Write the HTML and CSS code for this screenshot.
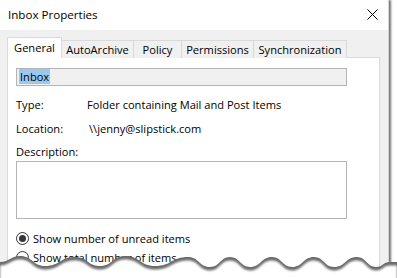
FILE: index.html
```html
<!DOCTYPE html>
<html lang="en">
<head>
  <meta charset="UTF-8" />
  <title>Inbox Properties</title>
  <link rel="stylesheet" href="styles.css">
</head>
<body>

  <div class="window">
    <header class="titlebar">
      <span class="title">Inbox Properties</span>
      <svg class="close" width="11" height="11" viewBox="0 0 11 11">
        <path d="M0.5 0.5 L10.5 10.5 M10.5 0.5 L0.5 10.5" stroke="#000" stroke-width="1" fill="none"/>
      </svg>
    </header>

    <div class="dialog">
      <nav class="tabs">
        <span class="tab active">General</span>
        <span class="tab">AutoArchive</span>
        <span class="tab">Policy</span>
        <span class="tab">Permissions</span>
        <span class="tab">Synchronization</span>
      </nav>

      <div class="panel">
        <div class="name-box"><span class="selected">Inbox</span></div>

        <div class="field-row first">
          <span class="label">Type:</span>
          <span>Folder containing Mail and Post Items</span>
        </div>
        <div class="field-row">
          <span class="label">Location:</span>
          <span class="path">\\jenny@slipstick.com</span>
        </div>

        <div class="desc-label">Description:</div>
        <div class="desc-box"></div>

        <div class="options">
          <div class="radio-row"><span class="radio checked"></span>Show number of unread items</div>
          <div class="radio-row"><span class="radio"></span>Show total number of items</div>
        </div>
      </div>
    </div>
  </div>

  <!-- torn paper edge -->
  <svg class="tear" width="397" height="26" viewBox="0 0 397 26">
    <defs>
      <filter id="soft" x="-5%" y="-50%" width="110%" height="200%">
        <feGaussianBlur stdDeviation="1.1"/>
      </filter>
    </defs>
    <path fill="#6a6a6a" d="M0 10 C10 10 10 4 20 4 C32.5 4 32.5 14 45 14 C60 14 60 5 75 5 C87.5 5 87.5 14 100 14 C112.5 14 112.5 4 125 4 C140 4 140 14 155 14 C171.5 14 171.5 5 188 5 C199 5 199 15 210 15 C220 15 220 5 230 5 C240 5 240 15 250 15 C261 15 261 5 272 5 C282 5 282 15 292 15 C303 15 303 5 314 5 C324 5 324 15 334 15 C345.5 15 345.5 5 357 5 C366.5 5 366.5 15 376 15 C383 15 383 10 390 10 L397 10 L397 26 L0 26 Z"/>
    <path fill="#fff" filter="url(#soft)" transform="translate(0,3.5)" d="M0 10 C10 10 10 4 20 4 C32.5 4 32.5 14 45 14 C60 14 60 5 75 5 C87.5 5 87.5 14 100 14 C112.5 14 112.5 4 125 4 C140 4 140 14 155 14 C171.5 14 171.5 5 188 5 C199 5 199 15 210 15 C220 15 220 5 230 5 C240 5 240 15 250 15 C261 15 261 5 272 5 C282 5 282 15 292 15 C303 15 303 5 314 5 C324 5 324 15 334 15 C345.5 15 345.5 5 357 5 C366.5 5 366.5 15 376 15 C383 15 383 10 390 10 L397 10 L397 30 L0 30 Z"/>
  </svg>

</body>
</html>
```

FILE: styles.css
```css
* {
  margin: 0;
  padding: 0;
  box-sizing: border-box;
}

body {
  width: 397px;
  height: 278px;
  overflow: hidden;
  background: #fff;
  font-family: 'Open Sans', 'Noto Sans', sans-serif;
  font-size: 11.1px;
  color: #000;
  position: relative;
}

.window {
  width: 389px;
  height: 278px;
  background: #f0f0f0;
  border-right: 1px solid #d4d4d4;
  box-shadow: 2px 0 2px rgba(0, 0, 0, 0.55);
  display: flex;
  flex-direction: column;
}

.titlebar {
  height: 30px;
  background: #fff;
  display: flex;
  align-items: center;
  justify-content: space-between;
  padding: 0 10px 0 8px;
}

.title {
  font-size: 11.6px;
  margin-top: -1px;
}

.close {
  margin-top: -2px;
}

.dialog {
  flex: 1;
  padding: 7px 8px 0 7px;
  display: flex;
  flex-direction: column;
}

.tabs {
  display: flex;
  align-items: flex-end;
  height: 21px;
  position: relative;
  z-index: 1;
}

.tab {
  height: 18px;
  line-height: 17px;
  text-align: center;
  border: 1px solid #d9d9d9;
  border-left: none;
  border-bottom: none;
  background: #f0f0f0;
}

.tab.active {
  width: 55px;
  height: 21px;
  line-height: 20px;
  border-left: 1px solid #d9d9d9;
  background: #fff;
}

.tab:nth-child(2) { width: 72px; }
.tab:nth-child(3) { width: 48px; }
.tab:nth-child(4) { width: 72px; }
.tab:nth-child(5) { width: 93px; }

.panel {
  flex: 1;
  width: 373px;
  margin-top: -1px;
  background: #fff;
  border: 1px solid #d9d9d9;
  padding: 10px 8px 0;
}

.name-box {
  width: 331px;
  height: 18px;
  background: #f0f0f0;
  border: 1px solid #b4b4b4;
  padding: 0 2px;
  line-height: 15px;
}

.selected {
  background: #99c9ef;
  padding: 0 1px;
}

.field-row {
  display: flex;
  align-items: center;
  height: 24px;
}

.field-row.first {
  margin-top: 6px;
}

.label {
  width: 71px;
}

.path {
  padding-left: 2px;
}

.desc-label {
  height: 18px;
  line-height: 17px;
  margin-top: 3px;
}

.desc-box {
  width: 331px;
  height: 58px;
  border: 1px solid #b4b4b4;
}

.options {
  margin-top: 10px;
}

.radio-row {
  display: flex;
  align-items: center;
  height: 19px;
}

.radio {
  width: 13px;
  height: 13px;
  border: 1px solid #333;
  border-radius: 50%;
  margin-right: 4px;
  display: flex;
  align-items: center;
  justify-content: center;
  background: #fff;
}

.radio.checked::after {
  content: "";
  width: 7px;
  height: 7px;
  border-radius: 50%;
  background: #3a3340;
}

.tear {
  position: absolute;
  left: 0;
  bottom: 0;
}
```
